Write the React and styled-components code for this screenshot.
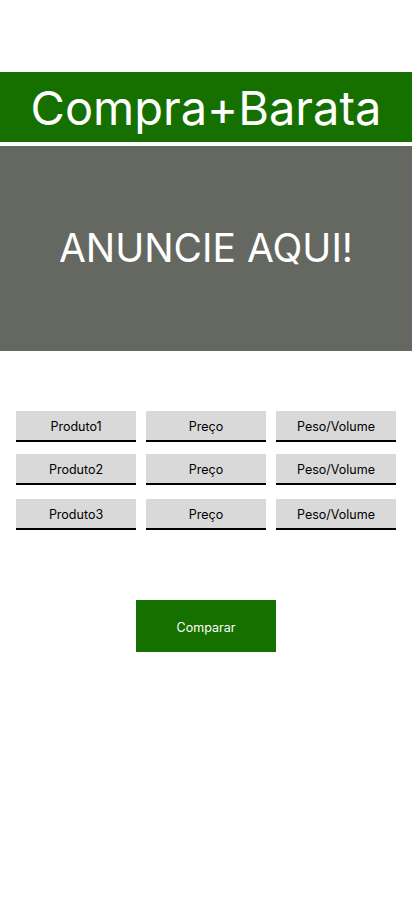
import React from "react";
import styled, { createGlobalStyle } from "styled-components";

const GlobalStyle = createGlobalStyle`
  html, body {
    margin: 0;
    padding: 0;
    background: #ffffff;
    font-family: Inter, "Noto Sans", sans-serif;
  }
`;

const Page = styled.div`
  width: 412px;
  min-height: 917px;
  display: flex;
  flex-direction: column;
  align-items: center;
  padding-top: 72px;
  box-sizing: border-box;
`;

const Header = styled.header`
  width: 100%;
  height: 70px;
  background: #167000;
  display: flex;
  align-items: center;
  justify-content: center;
`;

const Title = styled.h1`
  margin: 0;
  color: #ffffff;
  font-size: 47px;
  font-weight: 400;
  line-height: 1;
`;

const AdBanner = styled.div`
  width: 100%;
  height: 205px;
  margin-top: 4px;
  background: #646861;
  display: flex;
  align-items: center;
  justify-content: center;
  color: #ffffff;
  font-size: 39px;
  font-weight: 400;
  padding-bottom: 2px;
  box-sizing: border-box;
`;

const Table = styled.div`
  margin-top: 60px;
  width: 380px;
  display: flex;
  flex-direction: column;
`;

const Row = styled.div`
  display: grid;
  grid-template-columns: repeat(3, 120px);
  column-gap: 10px;
  margin-top: ${(p) => p.$top}px;
`;

const Field = styled.input`
  box-sizing: border-box;
  width: 120px;
  height: 31px;
  border: none;
  border-bottom: 2px solid #000000;
  background: #d9d9d9;
  font-family: Inter, "Noto Sans", sans-serif;
  font-size: 12.5px;
  color: #000000;
  text-align: center;
  padding: 2px 0 0;
  outline: none;

  &::placeholder {
    color: #000000;
    opacity: 1;
  }
`;

const CompareButton = styled.button`
  margin-top: 70px;
  width: 140px;
  height: 52px;
  border: none;
  background: #167000;
  color: #ffffff;
  font-family: Inter, "Noto Sans", sans-serif;
  font-size: 12.5px;
  padding: 2px 0 0;
  cursor: pointer;
`;

const rows = [
  { name: "Produto1", top: 0 },
  { name: "Produto2", top: 12 },
  { name: "Produto3", top: 14 },
];

export default function App() {
  return (
    <>
      <GlobalStyle />
      <Page>
        <Header>
          <Title>Compra+Barata</Title>
        </Header>
        <AdBanner>ANUNCIE AQUI!</AdBanner>
        <Table>
          {rows.map((r) => (
            <Row key={r.name} $top={r.top}>
              <Field placeholder={r.name} />
              <Field placeholder="Preço" />
              <Field placeholder="Peso/Volume" />
            </Row>
          ))}
        </Table>
        <CompareButton>Comparar</CompareButton>
      </Page>
    </>
  );
}
